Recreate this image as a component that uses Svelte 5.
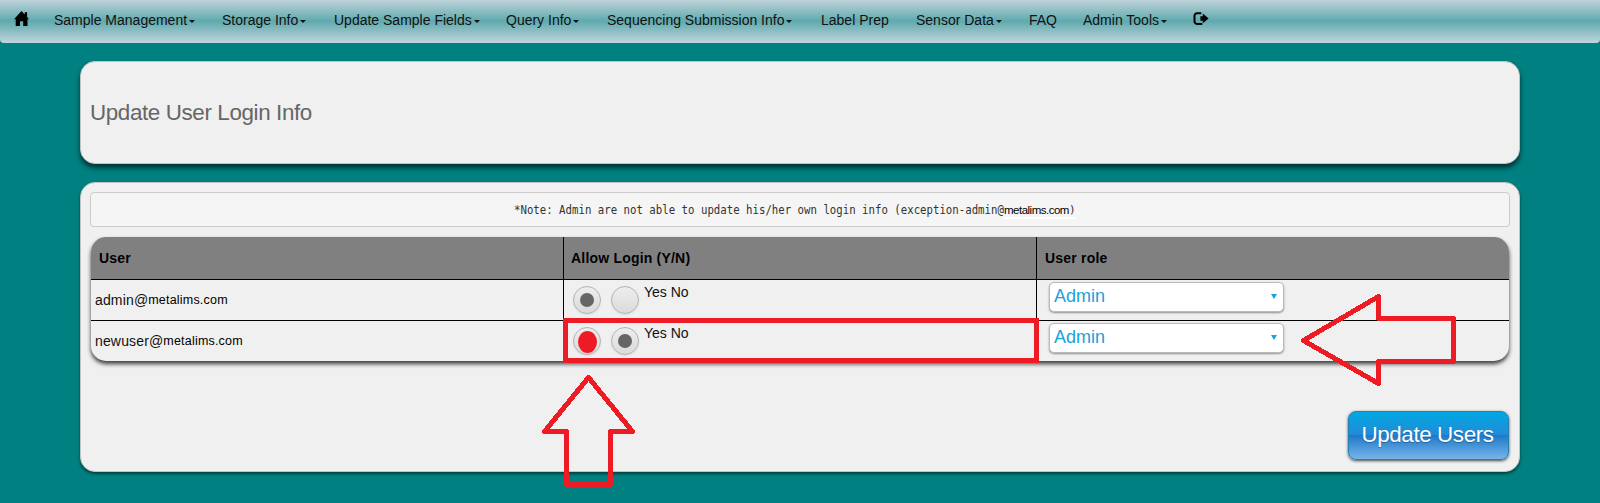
<script>
  const menu = [
    { label: 'Sample Management', caret: true, width: 168 },
    { label: 'Storage Info', caret: true, width: 112 },
    { label: 'Update Sample Fields', caret: true, width: 172 },
    { label: 'Query Info', caret: true, width: 101 },
    { label: 'Sequencing Submission Info', caret: true, width: 214 },
    { label: 'Label Prep', caret: false, width: 95 },
    { label: 'Sensor Data', caret: true, width: 113 },
    { label: 'FAQ', caret: false, width: 54 },
    { label: 'Admin Tools', caret: true, width: 110 }
  ];
  const users = [
    { name: 'admin@', login: 'yes', marked: false },
    { name: 'newuser@', login: 'no', marked: true }
  ];
</script>

<div class="page">
  <nav>
    <svg class="home" viewBox="0 0 14 14" width="15" height="15"><path d="M7 0 0 7.6h1.6V14h4V9.5h3V14h4V7.6H14L12.2 5.6V1.2H10V3.2z" /></svg>
    {#each menu as item}
      <div class="item" style="width:{item.width}px">
        <span>{item.label}</span>{#if item.caret}<i class="caret"></i>{/if}
      </div>
    {/each}
    <svg class="logout" viewBox="0 0 16 14" width="16" height="14"><path d="M8.3 1.2H4A2.6 2.6 0 0 0 1.5 4v5.3A2.6 2.6 0 0 0 4 12h5.3" fill="none" stroke="#000" stroke-width="2" /><path d="M9.8 1.6 15.6 6.4 9.8 11.2V8.8H7.4V4.2h2.4z" /></svg>
  </nav>

  <section class="card title"><h1>Update User Login Info</h1></section>

  <section class="card main">
    <div class="note">
      <span class="mono">*Note: Admin are not able to update his/her own login info (exception-admin@</span><span class="domain">metalims.com</span><span class="close">)</span>
    </div>
    <div class="table">
      <div class="row head">
        <div class="cell">User</div>
        <div class="cell">Allow Login (Y/N)</div>
        <div class="cell">User role</div>
      </div>
      {#each users as user}
        <div class="row">
          <div class="cell user">{user.name}<span>metalims.com</span></div>
          <div class="cell choice">
            <i class="radio" class:on={user.login === 'yes'} class:red={user.marked}></i>
            <i class="radio" class:on={user.login === 'no'}></i>
            <span>Yes No</span>
            {#if user.marked}<b class="frame"></b>{/if}
          </div>
          <div class="cell role">
            <div class="select"><span>Admin</span><i></i></div>
          </div>
        </div>
      {/each}
    </div>
    <button>Update Users</button>
  </section>

  <svg class="arrows" width="1600" height="503" viewBox="0 0 1600 503" fill="none" stroke="#ed1c24" stroke-width="5" stroke-linejoin="round" shape-rendering="crispEdges">
    <path d="M588.5 377.5 544.5 431.5H566.5V484.5H610.5V431.5H632.5Z" />
    <path d="M1303.5 340.5 1378.5 296.5V318.5H1453.5V361.5H1378.5V383.5Z" />
  </svg>
</div>

<style>
  :global(body) { background: #008080; overflow: hidden; }
  .page { position: relative; height: 503px; font-family: "Liberation Sans", Arial, sans-serif; font-size: 14px; color: #111; overflow: hidden; }
  nav { height: 43px; box-sizing: border-box; display: flex; align-items: center; padding: 0 14px; border-radius: 0 0 4px 4px; background: linear-gradient(#bed3da 0%, #5faaae 49%, #c1d5dc 100%); }
  .home { margin: -7px 25px 0 0; flex: none; }
  .item { flex: none; display: flex; align-items: center; letter-spacing: 0; white-space: nowrap; height: 40px; padding-bottom: 3px; box-sizing: border-box; }
  .caret { border: 3px solid transparent; border-top-color: #111; border-bottom: 0; margin: 3px 0 0 2px; }
  .logout { margin: -6px 0 0 0; }
  .card { box-sizing: border-box; width: 1440px; margin: 18px 80px 0; background: #f0f0f0; border: 1px solid #c0c4c4; border-radius: 15px; box-shadow: 0 4px 5px rgba(0,0,0,.6); }
  .title { height: 103px; display: flex; align-items: center; padding: 0 9px; }
  h1 { margin: 0; font-size: 22.4px; font-weight: 400; color: #666; white-space: nowrap; letter-spacing: -.38px; }
  .main { height: 290px; padding: 9px; display: flex; flex-direction: column; box-shadow: 0 2px 3px rgba(0,0,0,.5); }
  .note { box-sizing: border-box; height: 35px; border: 1px solid #ccc; border-radius: 4px; background: #f5f5f5; display: flex; align-items: center; padding-left: 423px; color: #333; white-space: nowrap; }
  .mono, .close { font: 11.5px "DejaVu Sans Mono", monospace; }
  .mono { width: 490px; flex: none; transform: scaleX(.931); transform-origin: left; }
  .domain, .close { height: 14px; line-height: 14px; border-bottom: 2px solid #fff; margin-top: 3px; }
  .domain { font-size: 11.5px; color: #000; width: 65px; letter-spacing: -.5px; }
  .close { font-size: 11px; }
  .table { margin: 10px 1px 0; border-radius: 15px; box-shadow: 0 3px 4px rgba(0,0,0,.75); background: #f0f0f0; }
  .row { display: grid; grid-template-columns: 473px 473px 472px; height: 41px; box-sizing: border-box; border-top: 1px solid #000; }
  .row.head { height: 42px; border: 0; background: #808080; border-radius: 15px 15px 0 0; font-weight: 700; letter-spacing: .2px; color: #000; }
  .cell { position: relative; box-sizing: border-box; border-right: 1px solid #000; display: flex; align-items: center; padding-left: 4px; }
  .cell:last-child { border-right: 0; }
  .head .cell { padding-left: 8px; }
  .head .cell:nth-child(2) { padding-left: 7px; }
  .user { letter-spacing: .15px; }
  .user span { font-size: 12.5px; color: #000; letter-spacing: .2px; }
  .choice { align-items: flex-start; padding: 6px 0 0 9px; }
  .radio { flex: none; box-sizing: border-box; width: 28px; height: 28px; border: 1px solid #b3b3b3; border-radius: 50%; margin-right: 10px; background: linear-gradient(#eee, #dadada); box-shadow: 0 1px 2px rgba(0,0,0,.08); display: grid; place-items: center; }
  .radio + .radio { margin-right: 5px; }
  .on::after, .red::after { content: ""; width: 14px; height: 14px; border-radius: 50%; background: #666; }
  .red::after { width: 19px; height: 22px; background: #ed1c24; margin-top: 2px; }
  .choice span { margin-top: -2px; }
  .frame { position: absolute; left: -1px; top: -3px; width: 476px; height: 45px; box-sizing: border-box; border: 5px solid #ed1c24; z-index: 2; }
  .role { align-items: flex-start; padding: 2px 0 0 12px; }
  .select { box-sizing: border-box; width: 235px; height: 30px; border: 1px solid #bbb; border-radius: 5px; background: #fff; box-shadow: 0 1px 2px rgba(0,0,0,.4); color: #1ba1dc; font-size: 18px; display: flex; justify-content: space-between; padding: 3px 6px 0 4px; line-height: 21px; }
  .select i { border: 3px solid transparent; border-top: 5px solid #1ba1dc; border-bottom: 0; height: 0; margin-top: 8px; }
  button { align-self: flex-end; margin: 50px 1px 0 0; width: 161px; height: 49px; padding: 0 2px 2px 0; border: 1px solid #237fae; border-radius: 8px; background: linear-gradient(#00a9e2 0, #238ad8 49%, #1f79c9 50%, #77b5e9 100%); box-shadow: 0 1px 3px rgba(0,0,0,.7); color: #fff; font: 22.4px "Liberation Sans", Arial, sans-serif; letter-spacing: -.4px; white-space: nowrap; text-shadow: 0 1px 1px rgba(0,0,0,.3); }
  .arrows { position: absolute; left: 0; top: 0; pointer-events: none; z-index: 3; }
</style>
